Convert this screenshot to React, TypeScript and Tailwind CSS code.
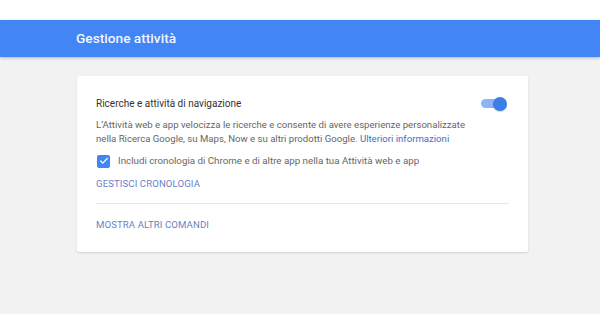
import { Check } from "lucide-react";

export default function App() {
  return (
    <div
      className="w-[600px] h-[314px] bg-[#f2f2f2] overflow-hidden"
      style={{ fontFamily: "Roboto, 'Liberation Sans', sans-serif" }}
    >
      {/* Top strip */}
      <div className="h-[20px] bg-white" />

      {/* Header bar */}
      <div className="h-[37px] bg-[#4285f4] shadow-[0_1px_3px_rgba(0,0,0,0.25)] flex items-center pl-[76px]">
        <span className="text-[13.7px] font-medium text-white/95">
          Gestione attività
        </span>
      </div>

      {/* Card */}
      <div className="ml-[77px] mt-[19px] w-[451px] bg-white rounded-[2px] shadow-[0_1px_2px_rgba(0,0,0,0.14)] px-[19px] pt-[20px] pb-[20px]">
        <div className="flex items-center justify-between">
          <span className="text-[10px] text-[#333]">
            Ricerche e attività di navigazione
          </span>
          <div className="relative w-[26px] h-[14px] mr-[2px] flex items-center">
            <div className="w-[24px] h-[9px] rounded-full bg-[#8cb4f6]" />
            <div className="absolute right-0 top-0 w-[14px] h-[14px] rounded-full bg-[#3b7ee8] shadow-[0_1px_1px_rgba(0,0,0,0.2)]" />
          </div>
        </div>

        <p className="mt-[7px] text-[9.6px] leading-[14px] text-[#666]">
          L’Attività web e app velocizza le ricerche e consente di avere esperienze personalizzate
          <br />
          nella Ricerca Google, su Maps, Now e su altri prodotti Google.{" "}
          <span className="text-[#3f6fc4]">Ulteriori informazioni</span>
        </p>

        <div className="mt-[8px] flex items-center gap-[8px]">
          <div className="w-[13px] h-[13px] ml-[1px] rounded-[2px] bg-[#4285f4] flex items-center justify-center">
            <Check className="w-[10px] h-[10px] text-white" strokeWidth={3} />
          </div>
          <span className="text-[9.75px] text-[#666]">
            Includi cronologia di Chrome e di altre app nella tua Attività web e app
          </span>
        </div>

        <div className="mt-[8px] text-[9.6px] text-[#6b7fc4] tracking-[0.1px]">
          GESTISCI CRONOLOGIA
        </div>

        <div className="mt-[12px] border-t border-[#e6e6e6]" />

        <div className="mt-[14px] text-[9.6px] text-[#6b7fc4] tracking-[0.1px]">
          MOSTRA ALTRI COMANDI
        </div>
      </div>
    </div>
  );
}
